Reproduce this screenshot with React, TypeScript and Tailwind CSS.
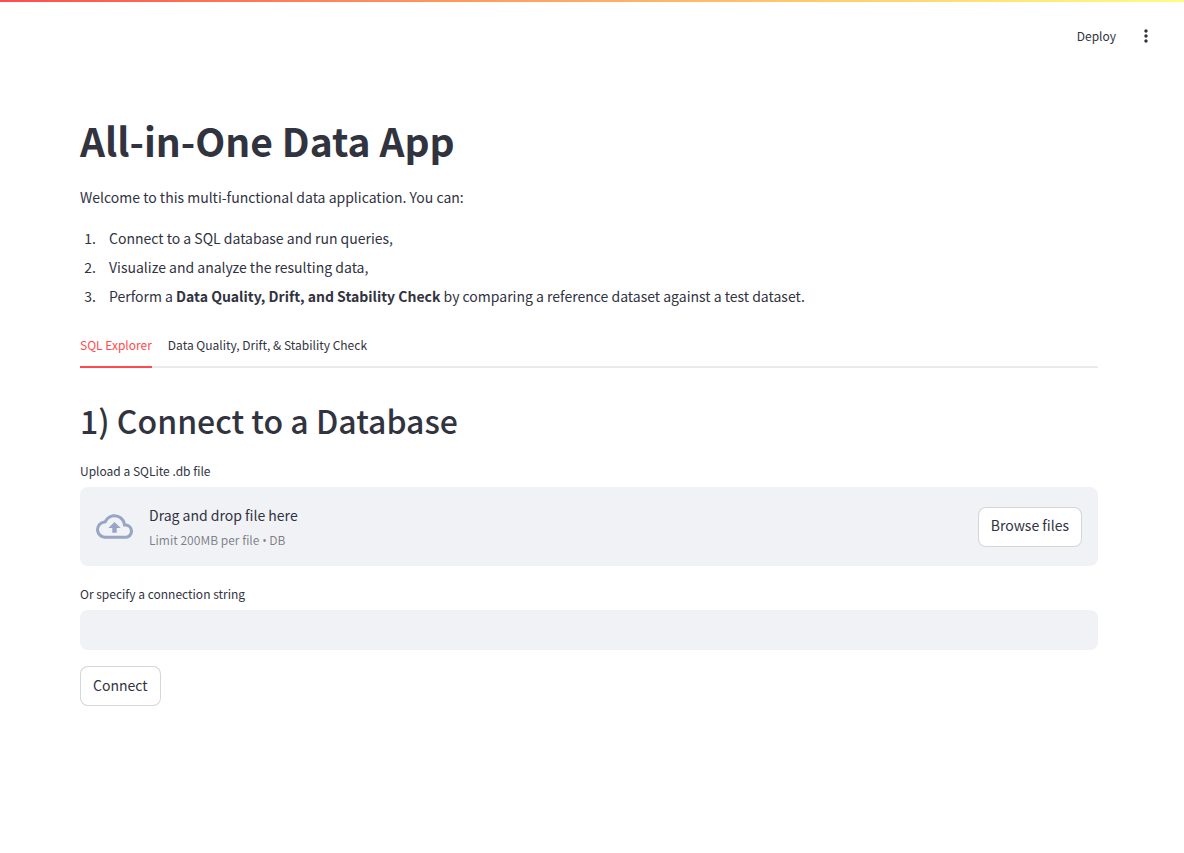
import { useState } from "react";

const tabs = ["SQL Explorer", "Data Quality, Drift, & Stability Check"];

function Header() {
  return (
    <header>
      <div className="h-0.5 bg-linear-to-r from-[#ff4b4b] to-[#fffd80]" />
      <div className="flex h-[68px] items-center justify-end gap-2 pr-6">
        <button type="button" className="px-2 text-[12px] leading-5">Deploy</button>
        <button type="button" aria-label="Main menu" className="flex size-7 items-center justify-center">
          <svg viewBox="0 0 24 24" className="size-5" fill="currentColor" aria-hidden="true">
            <path d="M12 8c1.1 0 2-.9 2-2s-.9-2-2-2-2 .9-2 2 .9 2 2 2zm0 2c-1.1 0-2 .9-2 2s.9 2 2 2 2-.9 2-2-.9-2-2-2zm0 6c-1.1 0-2 .9-2 2s.9 2 2 2 2-.9 2-2-.9-2-2-2z" />
          </svg>
        </button>
      </div>
    </header>
  );
}

function UploadBox() {
  return (
    <section>
      <h3 className="mb-1 text-[12px] leading-6">Upload a SQLite .db file</h3>
      <div className="flex items-center rounded-lg bg-[#f0f2f6] px-4 py-[13px]">
        <svg viewBox="0 0 24 24" className="mr-4 size-[37px] shrink-0 text-[#98a5c4]" fill="currentColor" aria-hidden="true">
          <path d="M19.35 10.04A7.49 7.49 0 0012 4C9.11 4 6.6 5.64 5.35 8.04A5.994 5.994 0 000 14c0 3.31 2.69 6 6 6h13c2.76 0 5-2.24 5-5 0-2.64-2.05-4.78-4.65-4.96zM19 18H6c-2.21 0-4-1.79-4-4 0-2.05 1.53-3.76 3.56-3.97l1.07-.11.5-.95A5.469 5.469 0 0112 6c2.62 0 4.88 1.86 5.39 4.43l.3 1.5 1.53.11A2.98 2.98 0 0122 15c0 1.65-1.35 3-3 3zM8 13h2.55v3h2.9v-3H16l-4-4z" />
        </svg>
        <div className="flex flex-1 flex-col pt-[3px]">
          <span className="leading-6">Drag and drop file here</span>
          <span className="text-[12px] leading-[25px] text-[#31333f]/60">
            Limit 200MB per file <span className="font-['Open_Sans',sans-serif]">•</span> DB
          </span>
        </div>
        <button type="button" className="h-10 rounded-lg border border-[#31333f]/20 bg-white px-3 pb-0.5">Browse files</button>
      </div>
    </section>
  );
}

export default function App() {
  const [active, setActive] = useState(0);
  return (
    <div className="min-h-screen bg-white font-['Noto_Sans_CJK_SC',sans-serif] text-[14px] text-[#31333f]">
      <Header />
      <main className="pt-11 pr-[86px] pb-20 pl-20">
        <h1 className="text-[39px] leading-[52px] font-bold">All-in-One Data App</h1>
        <p className="mt-[19px] leading-6">Welcome to this multi-functional data application. You can:</p>
        <ol className="mt-[15px] list-decimal pl-[19px] leading-[29px]">
          <li className="pl-[10px]">Connect to a SQL database and run queries,</li>
          <li className="pl-[10px]">Visualize and analyze the resulting data,</li>
          <li className="pl-[10px]">
            Perform a <strong className="font-semibold">Data Quality, Drift, and Stability Check</strong> by comparing a reference dataset against a test dataset.
          </li>
        </ol>
        <div role="tablist" className="mt-[14px] flex gap-4 border-b-2 border-[#31333f]/10">
          {tabs.map((tab, i) => (
            <button
              key={tab}
              type="button"
              role="tab"
              aria-selected={i === active}
              onClick={() => setActive(i)}
              className={
                i === active
                  ? "-mb-0.5 h-[43px] border-b-2 border-[#ff4b4b] pb-0.5 text-[12px] text-[#ff4b4b]"
                  : "-mb-0.5 h-[43px] border-b-2 border-transparent pb-0.5 text-[12px]"
              }
            >
              {tab}
            </button>
          ))}
        </div>
        <h2 className="mt-[31px] text-[32px] leading-[43px] font-medium">1) Connect to a Database</h2>
        <div className="mt-[17px] flex flex-col gap-4">
          <UploadBox />
          <div>
            <label htmlFor="connection" className="mb-1 block text-[12px] leading-6">Or specify a connection string</label>
            <input id="connection" type="text" className="block h-10 w-full rounded-lg bg-[#f0f2f6] px-3 outline-none" />
          </div>
          <button type="button" className="h-10 self-start rounded-lg border border-[#31333f]/20 bg-white px-3 pb-0.5">Connect</button>
        </div>
      </main>
    </div>
  );
}
